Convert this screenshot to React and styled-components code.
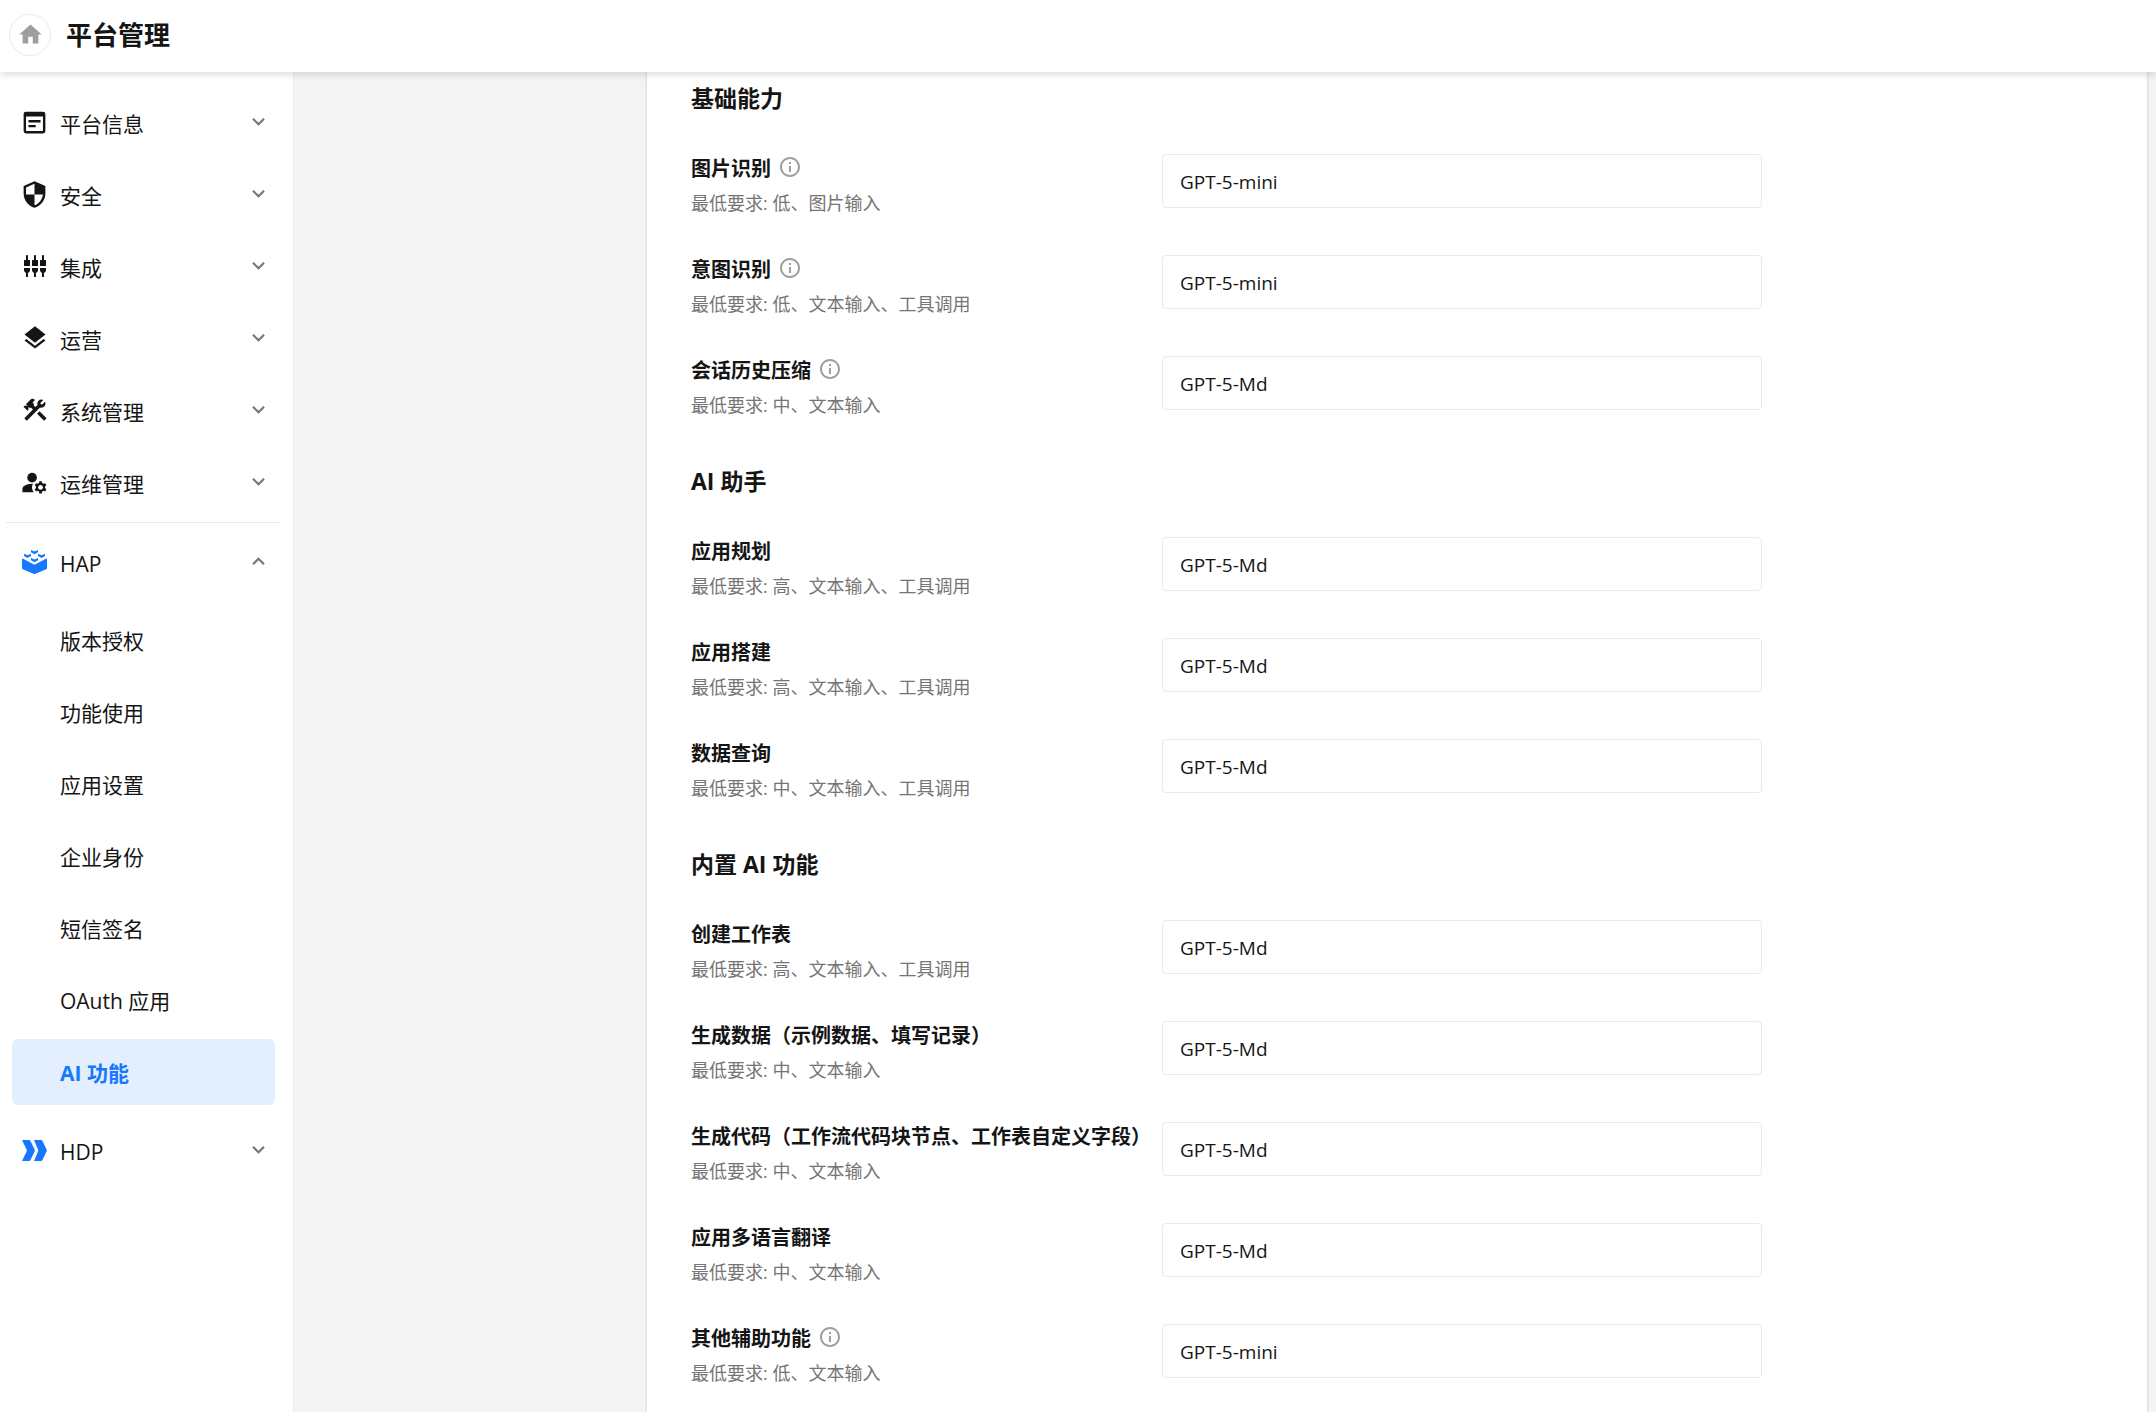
import React from 'react';
import styled, { createGlobalStyle } from 'styled-components';
import {
  MdConstruction,
  MdExpandLess,
  MdExpandMore,
  MdHome,
  MdInfoOutline,
  MdLayers,
  MdManageAccounts,
  MdSecurity,
  MdSettingsInputComponent,
  MdWysiwyg,
} from 'react-icons/md';

const GlobalStyle = createGlobalStyle`
  * {
    box-sizing: border-box;
  }
  body {
    margin: 0;
    background: #f4f4f4;
    color: #151515;
    font-family: 'Open Sans', 'Noto Sans CJK SC', sans-serif;
  }
  button,
  input {
    font-family: inherit;
    color: inherit;
  }
`

const Page = styled.div`
  display: flex;
  flex-direction: column;
  height: 100vh;
  overflow: hidden;
`

const Header = styled.header`
  position: relative;
  z-index: 1;
  display: flex;
  align-items: center;
  gap: 15px;
  height: 72px;
  flex-shrink: 0;
  padding: 0 9px 2px;
  background: #fff;
  box-shadow: 0 2px 8px rgba(0, 0, 0, 0.16);
`

const HomeButton = styled.button`
  display: flex;
  align-items: center;
  justify-content: center;
  width: 42px;
  height: 42px;
  padding: 0 0 2px;
  border: 1px solid #eaeaea;
  border-radius: 50%;
  background: #fff;
  color: #9e9e9e;
  font-size: 27px;
`

const Title = styled.h1`
  margin: 0;
  font-size: 26px;
  line-height: 36px;
  font-weight: 700;
`

const Body = styled.div`
  display: flex;
  flex: 1;
  min-height: 0;
`

const Sidebar = styled.nav`
  width: 294px;
  flex-shrink: 0;
  padding: 17px 0;
  border-right: 1px solid #eaeaea;
  background: #fff;
`

const NavGroup = styled.div`
  display: flex;
  flex-direction: column;
  gap: 6px;
  padding: 0 18px 0 12px;
`

const Divider = styled.hr`
  margin: 7px 12px 6px 6px;
  border: 0;
  border-top: 1px solid #eaeaea;
`

const NavButton = styled.button`
  display: flex;
  align-items: center;
  height: 66px;
  padding: 0 4px 0 10px;
  border: 0;
  border-radius: 6px;
  background: none;
  text-align: left;
`

const NavIcon = styled.span`
  display: flex;
  align-items: center;
  justify-content: center;
  width: 25px;
  margin-right: 13px;
  color: ${({ $blue }) => ($blue ? '#1677ff' : '#151515')};
  font-size: ${({ $size }) => $size || 28}px;

  svg {
    flex-shrink: 0;
  }
`

const NavText = styled.span`
  flex: 1;
  padding-top: 3px;
  font-size: 21px;
  line-height: 30px;
`

const Chevron = styled.span`
  display: flex;
  padding-bottom: 2px;
  color: #757575;
  font-size: 25px;
`

const SubList = styled.ul`
  display: flex;
  flex-direction: column;
  gap: 6px;
  margin: 6px 0;
  padding: 0;
  list-style: none;
`

const SubLink = styled.a`
  display: flex;
  align-items: center;
  height: 66px;
  padding: 2px 48px 0;
  border-radius: 6px;
  background: ${({ $active }) => ($active ? '#e3eeff' : 'none')};
  color: ${({ $active }) => ($active ? '#1677ff' : '#151515')};
  font-size: 21px;
  line-height: 30px;
  font-weight: ${({ $active }) => ($active ? 700 : 400)};
  text-decoration: none;
`

const Gutter = styled.div`
  width: 353px;
  flex-shrink: 0;
`

const Panel = styled.main`
  flex: 1;
  min-width: 0;
  margin-right: 9px;
  padding: 9px 44px;
  background: #fff;
  box-shadow: 0 0 3px rgba(0, 0, 0, 0.2);
`

const Section = styled.section`
  display: flex;
  flex-direction: column;
  gap: 39px;
  margin-bottom: 46px;
`

const SectionTitle = styled.h2`
  margin: 0;
  font-size: 23px;
  line-height: 34px;
  font-weight: 700;
`

const SettingRow = styled.div`
  display: grid;
  grid-template-columns: minmax(0, 471px) minmax(0, 600px);
  align-items: start;
`

const SettingInfo = styled.div`
  display: flex;
  flex-direction: column;
  gap: 6px;
`

const SettingName = styled.div`
  display: flex;
  align-items: flex-start;
  gap: 7px;
  font-size: 20px;
  line-height: 30px;
  font-weight: 700;
  white-space: nowrap;
`

const InfoButton = styled.button`
  display: flex;
  padding: 1px 0 0;
  border: 0;
  background: none;
  color: #9e9e9e;
  font-size: 24px;
`

const Requirement = styled.div`
  color: #757575;
  font-size: 18px;
  line-height: 26px;
`

const ModelInput = styled.input`
  width: 100%;
  height: 54px;
  padding: 2px 17px 0;
  border: 1px solid #eaeaea;
  border-radius: 4px;
  background: #fff;
  font-size: 19px;
`

function HapIcon() {
  return (
    <svg width="25" height="24" viewBox="0 0 25 24" fill="currentColor">
      <path d="M0 9.4Q0 8.2 1.1 8.8L12.5 14.8 23.9 8.8Q25 8.2 25 9.4V18Q25 18.9 24.2 19.3L13.5 23.7Q12.5 24.1 11.5 23.7L.8 19.3Q0 18.9 0 18Z" />
      <path d="M9 0 12.5 1.5 16 0V2.2L12.5 4.2 9 2.2Z" />
      <path d="M2 3.8 5.5 5.3 9 3.8V6L5.5 8 2 6Z" />
      <path d="M16 3.8 19.5 5.3 23 3.8V6L19.5 8 16 6Z" />
      <path d="M9 8 12.5 9.5 16 8V10.2L12.5 12.2 9 10.2Z" />
    </svg>
  )
}

function HdpIcon() {
  return (
    <svg width="25" height="21" viewBox="0 0 25 21" fill="currentColor">
      <path d="M0 0H7Q8 0 8.5 1L12.6 9.5Q13 10.5 12.6 11.5L8.5 20Q8 21 7 21H0L4.6 11.5Q5 10.5 4.6 9.5Z" />
      <path d="M12 0H19Q20 0 20.5 1L24.6 9.5Q25 10.5 24.6 11.5L20.5 20Q20 21 19 21H12L16 11.5Q16.4 10.5 16 9.5Z" />
    </svg>
  )
}

const platformMenu = [
  { name: '平台信息', icon: <MdWysiwyg />, size: 29 },
  { name: '安全', icon: <MdSecurity />, size: 29 },
  { name: '集成', icon: <MdSettingsInputComponent />, size: 24 },
  { name: '运营', icon: <MdLayers /> },
  { name: '系统管理', icon: <MdConstruction /> },
  { name: '运维管理', icon: <MdManageAccounts />, size: 29 },
]

const hapMenu = ['版本授权', '功能使用', '应用设置', '企业身份', '短信签名', 'OAuth 应用', 'AI 功能']

const sections = [
  {
    title: '基础能力',
    rows: [
      { name: '图片识别', need: '低、图片输入', model: 'GPT-5-mini', info: true },
      { name: '意图识别', need: '低、文本输入、工具调用', model: 'GPT-5-mini', info: true },
      { name: '会话历史压缩', need: '中、文本输入', model: 'GPT-5-Md', info: true },
    ],
  },
  {
    title: 'AI 助手',
    rows: [
      { name: '应用规划', need: '高、文本输入、工具调用', model: 'GPT-5-Md' },
      { name: '应用搭建', need: '高、文本输入、工具调用', model: 'GPT-5-Md' },
      { name: '数据查询', need: '中、文本输入、工具调用', model: 'GPT-5-Md' },
    ],
  },
  {
    title: '内置 AI 功能',
    rows: [
      { name: '创建工作表', need: '高、文本输入、工具调用', model: 'GPT-5-Md' },
      { name: '生成数据（示例数据、填写记录）', need: '中、文本输入', model: 'GPT-5-Md' },
      { name: '生成代码（工作流代码块节点、工作表自定义字段）', need: '中、文本输入', model: 'GPT-5-Md' },
      { name: '应用多语言翻译', need: '中、文本输入', model: 'GPT-5-Md' },
      { name: '其他辅助功能', need: '低、文本输入', model: 'GPT-5-mini', info: true },
    ],
  },
]

function NavItem({ name, icon, size, blue, open, onClick }) {
  return (
    <NavButton type="button" aria-expanded={!!open} onClick={onClick}>
      <NavIcon $size={size} $blue={blue}>{icon}</NavIcon>
      <NavText>{name}</NavText>
      <Chevron>{open ? <MdExpandLess /> : <MdExpandMore />}</Chevron>
    </NavButton>
  )
}

function Setting({ id, name, need, model, info }) {
  return (
    <SettingRow>
      <SettingInfo>
        <SettingName>
          <label htmlFor={id}>{name}</label>
          {info && <InfoButton type="button" aria-label={name}><MdInfoOutline /></InfoButton>}
        </SettingName>
        <Requirement>最低要求: {need}</Requirement>
      </SettingInfo>
      <ModelInput id={id} type="text" defaultValue={model} />
    </SettingRow>
  )
}

function App() {
  const [hapOpen, setHapOpen] = React.useState(true)
  const [active, setActive] = React.useState('AI 功能')

  return (
    <Page>
      <GlobalStyle />
      <Header>
        <HomeButton type="button" aria-label="首页"><MdHome /></HomeButton>
        <Title>平台管理</Title>
      </Header>
      <Body>
        <Sidebar>
          <NavGroup>
            {platformMenu.map((item) => <NavItem key={item.name} {...item} />)}
          </NavGroup>
          <Divider />
          <NavGroup>
            <NavItem name="HAP" icon={<HapIcon />} blue open={hapOpen} onClick={() => setHapOpen(!hapOpen)} />
            {hapOpen && (
              <SubList>
                {hapMenu.map((name) => (
                  <li key={name}>
                    <SubLink href="#" $active={name === active} onClick={() => setActive(name)}>{name}</SubLink>
                  </li>
                ))}
              </SubList>
            )}
            <NavItem name="HDP" icon={<HdpIcon />} blue />
          </NavGroup>
        </Sidebar>
        <Gutter />
        <Panel>
          {sections.map((section, i) => (
            <Section key={section.title}>
              <SectionTitle>{section.title}</SectionTitle>
              {section.rows.map((row, j) => <Setting key={row.name} id={`model-${i}-${j}`} {...row} />)}
            </Section>
          ))}
        </Panel>
      </Body>
    </Page>
  );
}

export default App;
